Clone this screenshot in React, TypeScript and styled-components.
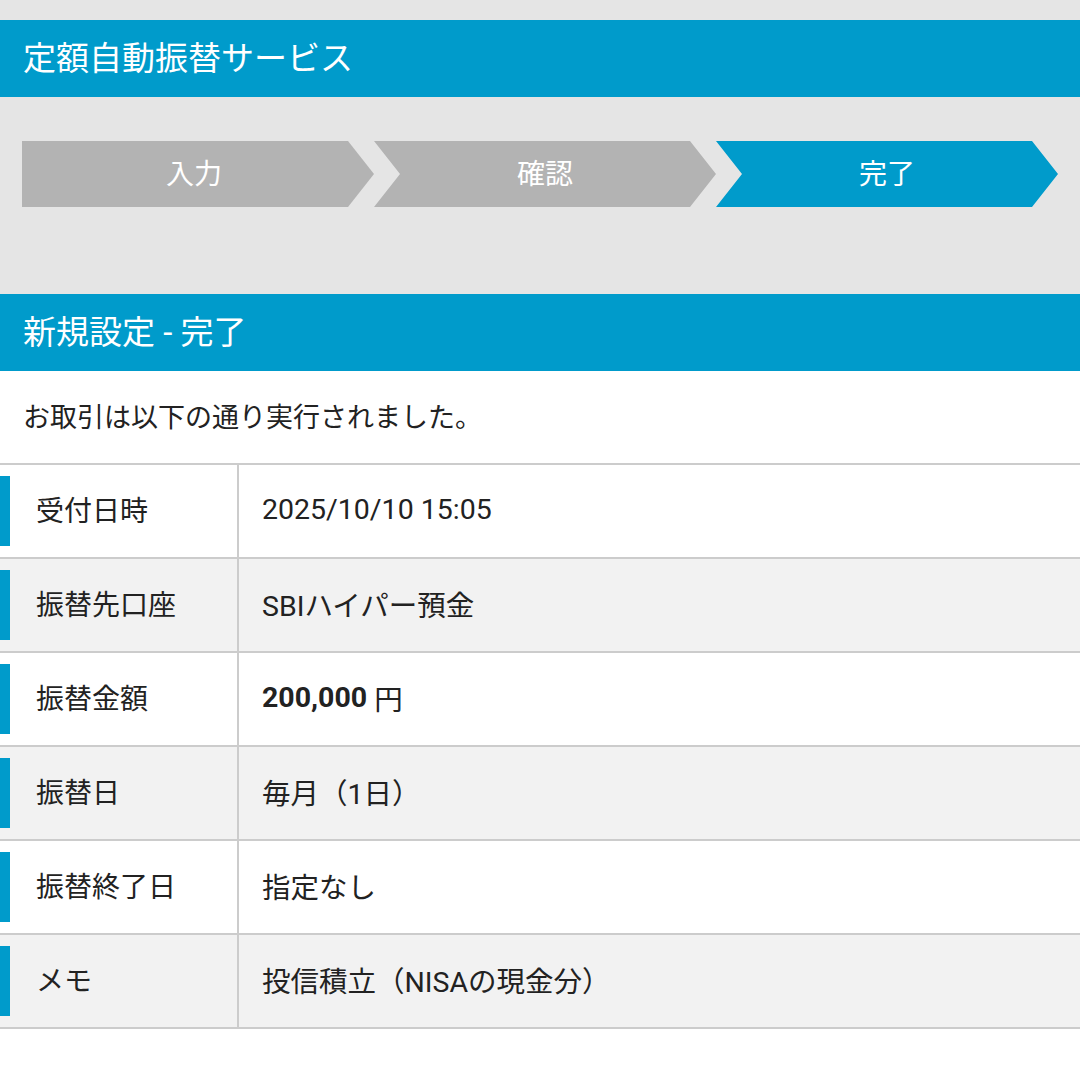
import React from 'react'
import styled, {createGlobalStyle} from 'styled-components'

const GlobalStyle = createGlobalStyle`
  html, body {
    margin: 0;
    padding: 0;
    background: #ffffff;
  }
  body {
    font-family: Roboto, "Noto Sans CJK JP", sans-serif;
    color: #222222;
  }
`

const steps = ['入力', '確認', '完了']

const App = () => {
  const rows: {label: string; value: React.ReactNode}[] = [
    {label: '受付日時', value: '2025/10/10 15:05'},
    {label: '振替先口座', value: 'SBIハイパー預金'},
    {label: '振替金額', value: <><Strong>200,000</Strong> 円</>},
    {label: '振替日', value: '毎月（1日）'},
    {label: '振替終了日', value: '指定なし'},
    {label: 'メモ', value: '投信積立（NISAの現金分）'},
  ]

  return (
    <Page>
      <GlobalStyle />
      <TopStrip />
      <Heading>定額自動振替サービス</Heading>

      <StepArea>
        <StepRow>
          {steps.map((s, i) => (
            <Step key={s} $first={i === 0} $active={i === steps.length - 1}>
              {s}
            </Step>
          ))}
        </StepRow>
      </StepArea>

      <Heading>新規設定 - 完了</Heading>

      <Intro>お取引は以下の通り実行されました。</Intro>

      <Table>
        {rows.map((r, i) => (
          <TableRow key={r.label} $shaded={i % 2 === 1}>
            <Label>{r.label}</Label>
            <Value>{r.value}</Value>
          </TableRow>
        ))}
      </Table>
    </Page>
  )
}

export default App

const Page = styled.div`
  width: 1080px;
  min-height: 1067px;
  background: #ffffff;
`

const TopStrip = styled.div`
  height: 20px;
  background: #e5e5e5;
`

const Heading = styled.h1`
  box-sizing: border-box;
  margin: 0;
  height: 77px;
  display: flex;
  align-items: center;
  padding: 0 23px 6px;
  background: #009bcb;
  color: #ffffff;
  font-size: 33px;
  font-weight: 400;
`

const StepArea = styled.div`
  background: #e5e5e5;
  padding: 44px 22px 87px;
`

const StepRow = styled.div`
  display: flex;
`

const Step = styled.div<{$first: boolean; $active: boolean}>`
  box-sizing: border-box;
  height: 66px;
  width: ${({$first}) => ($first ? '352px' : '342px')};
  display: flex;
  align-items: center;
  justify-content: center;
  padding: 0 ${({$first}) => ($first ? '8px' : '0')} 5px 0;
  background: ${({$active}) => ($active ? '#009bcb' : '#b3b3b3')};
  color: #ffffff;
  font-size: 28px;
  clip-path: ${({$first}) =>
    $first
      ? 'polygon(0 0, calc(100% - 26px) 0, 100% 50%, calc(100% - 26px) 100%, 0 100%)'
      : 'polygon(0 0, calc(100% - 26px) 0, 100% 50%, calc(100% - 26px) 100%, 0 100%, 26px 50%)'};
`

const Intro = styled.p`
  box-sizing: border-box;
  margin: 0;
  height: 92px;
  display: flex;
  align-items: center;
  padding: 0 23px 3px;
  font-size: 27px;
  color: #222222;
`

const Table = styled.div`
  border-top: 2px solid #cccccc;
`

const TableRow = styled.div<{$shaded: boolean}>`
  display: grid;
  grid-template-columns: 239px 1fr;
  height: 92px;
  border-bottom: 2px solid #cccccc;
  background: ${({$shaded}) => ($shaded ? '#f2f2f2' : '#ffffff')};
`

const Label = styled.div`
  position: relative;
  display: flex;
  align-items: center;
  padding: 0 0 4px 36px;
  border-right: 2px solid #cccccc;
  font-size: 28px;

  &::before {
    content: '';
    position: absolute;
    left: 0;
    top: 11px;
    bottom: 11px;
    width: 10px;
    background: #009bcb;
  }
`

const Value = styled.div`
  display: flex;
  align-items: center;
  padding: 0 0 4px 23px;
  font-size: 28.5px;
  white-space: pre;
`

const Strong = styled.strong`
  font-weight: 700;
`
